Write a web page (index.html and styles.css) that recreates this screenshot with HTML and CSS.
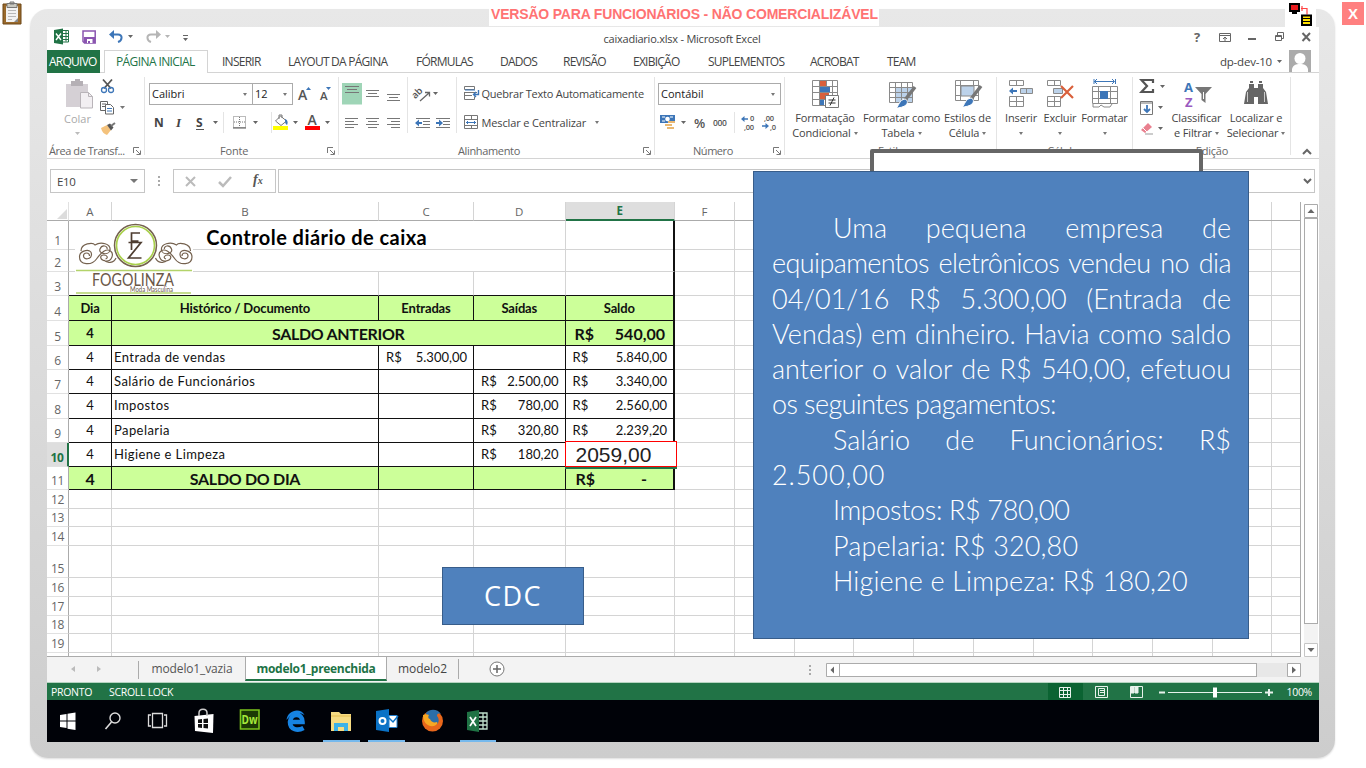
FILE: index.html
```html
<!DOCTYPE html>
<html lang="pt-BR">
<head>
<meta charset="utf-8">
<title>caixadiario.xlsx - Microsoft Excel</title>
<link rel="stylesheet" href="styles.css">
</head>
<body>
<div class="frame">
 <div class="window">
  <header class="titlebar">
   <svg width="150" height="23" viewBox="47 27 150 23">
    <path d="M54 30l9-1.500v16L54 43z" fill="#217346"/><path d="M56 33.500l5 6.500M61 33.500l-5 6.500" stroke="#fff" stroke-width="1.400"/>
    <path d="M63 30.500h5.500v11.500H63M63 33.500h5M63 36.500h5M63 39.500h5M66 30.500v11" stroke="#217346" fill="none"/>
    <path d="M83 31h12.200v12H84.500L83 41.500z" fill="none" stroke="#8a55b0" stroke-width="1.500"/><path d="M84 37h11v6H84z" fill="#8a55b0"/><path d="M87 39h5.500v4H87z" fill="#fff"/><path d="M88 41h2v2h-2z" fill="#8a55b0"/>
    <path d="M111 34.500h7c5 0 4.500 6 0 7.500" fill="none" stroke="#3d76b8" stroke-width="2"/><path d="M109 34.500l5-4.500v9z" fill="#3d76b8"/>
    <path d="M128 35h5l-2.500 3zM183 38h5l-2.500 3z" fill="#666"/><path d="M183 35.500h5" stroke="#666"/>
    <path d="M158 34.500h-7c-5 0-4.500 6 0 7.500" fill="none" stroke="#b5b5b5" stroke-width="2"/><path d="M161 34.500l-5-4.500v9z" fill="#b5b5b5"/><path d="M165 35h5l-2.500 3z" fill="#b5b5b5"/>
   </svg>
   <span class="doc-title">caixadiario.xlsx - Microsoft Excel</span>
   <svg width="132" height="23" viewBox="1187 27 132 23" fill="none" stroke="#666">
    <text x="1194" y="42" class="help">?</text>
    <path d="M1219.500 33.500h11v8h-11zM1219.500 35.500h11M1225 41v-4M1223 39l2-2 2 2"/>
    <path d="M1248 39h8" stroke-width="2"/>
    <path d="M1275.500 35.500h6v5h-6zM1277.500 35v-2.500h6v6h-2M1275 36.500h6"/>
    <path d="M1302.500 33l7.500 8M1310 33l-7.500 8" stroke-width="2"/>
   </svg>
  </header>

  <nav class="tabs">
   <span class="tab file">ARQUIVO</span>
   <span class="tab active">PÁGINA INICIAL</span>
   <span class="tab">INSERIR</span><span class="tab">LAYOUT DA PÁGINA</span><span class="tab">FÓRMULAS</span><span class="tab">DADOS</span><span class="tab">REVISÃO</span><span class="tab">EXIBIÇÃO</span><span class="tab">SUPLEMENTOS</span><span class="tab">ACROBAT</span><span class="tab">TEAM</span>
   <span class="tab user">dp-dev-10</span>
   <svg width="42" height="22" viewBox="1277 50 42 22"><path d="M1277 60h5l-2.500 3z" fill="#666"/><path d="M1289 50h22v22h-22z" fill="#ababab"/><circle cx="1300" cy="58.500" r="5.500" fill="#fff"/><path d="M1292 72v-3c1-4 4-5 8-5s7 1 8 5v3z" fill="#fff"/></svg>
  </nav>

  <section class="ribbon">
   <div class="group g-clip">
    <div class="tools">
     <svg width="97" height="71" viewBox="47 73 97 71" fill="none">
      <path d="M66 84h22v23H66z" fill="#d5d0d5"/><path d="M71 81h12v5H71zM75 79h5v3h-5z" fill="#b5b0b5"/><path d="M80.500 92.500h8l4 4v11.500h-12z" fill="#f2eff2" stroke="#b9b4b9"/><path d="M88.500 92.500v4h4" stroke="#b9b4b9"/>
      <text x="64" y="122.500" class="btn-text dim">Colar</text><path d="M75 132h5l-2.500 3z" fill="#bbb"/>
      <path d="M103 79.500l8 9M112 79.500l-8 9" stroke="#555" stroke-width="1.800"/><circle cx="104" cy="90" r="2.500" stroke="#3d76b8" stroke-width="1.300"/><circle cx="111" cy="90" r="2.500" stroke="#3d76b8" stroke-width="1.300"/>
      <path d="M100.500 101.500h7v9h-7zM102 104h4M102 106.500h4" stroke="#666"/><path d="M105.500 104.500h5l3 3v6.500h-8z" fill="#fff" stroke="#666"/><path d="M107 108.500h5M107 111h5" stroke="#3d76b8"/>
      <path d="M120 106h5l-2.500 3z" fill="#777"/>
      <path d="M101 128l6-3 4 5-4 5c-3-1-5-3-6-7z" fill="#f4c27c"/><path d="M107 125l3-1.500 3.500 4-2.500 3z" fill="#555"/><path d="M111 126l4-3" stroke="#777" stroke-width="2"/>
     </svg>
    </div>
    <div class="caption">Área de Transf...<svg class="launch" width="8" height="8"><path d="M.5 6V.5H6M3 3l4 4M7.500 3.500v4h-4" fill="none" stroke="#777"/></svg></div>
   </div>

   <div class="group g-font">
    <div class="tools">
     <div class="line first"><span class="combo font-name">Calibri</span><span class="combo font-size">12</span>
      <svg width="42" height="22" viewBox="294 83 42 22" fill="#555"><text x="297" y="99.500" class="glyph-a">A</text><path d="M305 90l2.500-3 2.500 3z" fill="#3d76b8"/><text x="319" y="99.500" class="glyph-a small">A</text><path d="M325 87h5l-2.500 3z" fill="#3d76b8"/></svg>
     </div>
     <svg width="190" height="30" viewBox="148 109 190 30" fill="none" stroke="#777">
      <g class="style-letters"><text x="154" y="127">N</text><text x="176" y="127" class="it">I</text><text x="196" y="127">S</text></g>
      <path d="M196 129.500h8" stroke="#555"/><path d="M223.500 112v21M271.500 112v21" stroke="#e4e4e4"/>
      <path d="M233.500 116.500h12v11h-12zM239.500 117v10M234 122h12" stroke-dasharray="1 1"/><path d="M233 128h13" stroke="#555"/>
      <path d="M213 121h5l-2.500 3zM253 121h5l-2.500 3zM293 121h5l-2.500 3zM325 121h5l-2.500 3z" fill="#666" stroke="none"/>
      <path d="M275.500 121l5-5 6 5-5.500 4.500zM279 119v-4h3v3"/><path d="M285 119c3 1 3 4 2 6-2-1-2-3-2-6z" fill="#3d76b8" stroke="none"/>
      <path d="M273 126h15v4h-15z" fill="#ff0" stroke="none"/><path d="M305 126h15v4h-15z" fill="#f00" stroke="none"/>
      <text x="307.500" y="125" class="glyph-a bold">A</text>
     </svg>
    </div>
    <div class="caption">Fonte<svg class="launch" width="8" height="8"><path d="M.5 6V.5H6M3 3l4 4M7.500 3.500v4h-4" fill="none" stroke="#777"/></svg></div>
   </div>

   <div class="group g-align">
    <div class="tools row-tools">
     <svg width="118" height="71" viewBox="339 73 118 71" fill="none" stroke="#777">
      <path d="M342 83h20v21.500h-20z" fill="#9fd5b7" stroke="none"/>
      <path d="M345 86.500h14M347 89.500h10M345 92.500h14M366 90.500h13M368 93.500h9M366 96.500h13M387 94.500h13M389 97.500h9M387 100.500h13"/>
      <path d="M345 118.500h13M345 121.500h9M345 124.500h13M345 127.500h9M366 118.500h13M368 121.500h9M366 124.500h13M368 127.500h9M387 118.500h13M391 121.500h9M387 124.500h13M391 127.500h9"/>
      <path d="M407.500 77v56M456.500 77v56" stroke="#e4e4e4"/>
      <text x="414" y="94" transform="rotate(-45 421 95)" class="tiny ab">ab</text><path d="M420 101l9-8M425 92.500h4.500v4" stroke="#666" stroke-width="1.300"/>
      <path d="M433 92h5l-2.500 3z" fill="#666" stroke="none"/>
      <path d="M416 118.500h14M423 121.500h7M423 124.500h7M416 127.500h14M436 118.500h14M443 121.500h7M443 124.500h7M436 127.500h14"/>
      <path d="M416 123h6M436 123h6" stroke="#3d76b8" stroke-width="2"/><path d="M415 123l4-3.500v7zM443 123l-4-3.500v7z" fill="#3d76b8" stroke="none"/>
     </svg>
     <div class="text-buttons">
      <span class="tb wrap-text"><svg width="16" height="15" fill="none" stroke="#777"><path d="M.5 .5h10v3H.5zM0 6.500h13M.5 6v7.500h10v-3M1 9.500h7"/><path d="M1 4h10" stroke="#3d76b8"/><path d="M14.500 4v4.500h-5M12 6L9.500 8.500 12 11" stroke="#3d76b8" stroke-width="1.400"/></svg>Quebrar Texto Automaticamente</span>
      <span class="tb merge"><svg width="16" height="15" fill="none" stroke="#777"><path d="M.5 .5h13v13H.5zM0 4.500h14M0 10.500h14M7.500 0v4M7.500 11v3"/><path d="M2 7.500h10M4 6L2.500 7.500 4 9M10 6l1.500 1.500L10 9" stroke="#3d76b8"/></svg>Mesclar e Centralizar<i class="arrow"></i></span>
     </div>
    </div>
    <div class="caption cap-align">Alinhamento<svg class="launch" width="8" height="8"><path d="M.5 6V.5H6M3 3l4 4M7.500 3.500v4h-4" fill="none" stroke="#777"/></svg></div>
   </div>

   <div class="group g-num">
    <div class="tools">
     <div class="line first"><span class="combo number-format">Contábil</span></div>
     <svg width="128" height="30" viewBox="656 109 128 30" fill="none">
      <path d="M661 115h15v8h-15z" fill="#3d76b8"/><path d="M663 117h3M671 117h3M663 121h3" stroke="#fff"/><circle cx="668.500" cy="119" r="2.300" fill="#fff"/><path d="M666 124h7v2h-7zM668 127h7v2h-7zM669 121h7v2h-7z" fill="#e9b872"/>
      <path d="M682 121h5l-2.500 3z" fill="#666"/><text x="695" y="128" class="pct">%</text><text x="714" y="125.500" class="tiny b">000</text><path d="M735.500 112v21" stroke="#e4e4e4"/>
      <path d="M744 119h5M763 126h6" stroke="#3d76b8" stroke-width="1.600"/><path d="M742 119l3.500-3v6zM770 126l-3.500-3v6z" fill="#3d76b8"/>
      <g class="tiny dec"><text x="751" y="121">0</text><text x="745" y="129.500">,00</text><text x="765" y="121">,00</text><text x="771" y="129.500">,0</text></g>
     </svg>
    </div>
    <div class="caption">Número<svg class="launch" width="8" height="8"><path d="M.5 6V.5H6M3 3l4 4M7.500 3.500v4h-4" fill="none" stroke="#777"/></svg></div>
   </div>

   <div class="group g-style">
    <div class="tools row-tools">
     <span class="big w-cond"><svg width="30" height="31" fill="none" stroke="#8a8a8a"><path d="M2.500 2.500h25v25h-25zM9.500 2v26M16.500 2v26M22.500 2v26M3 8.500h24M3 14.500h24M3 21.500h24" /><path d="M10 3h6v5h-6zM10 15h9v6h-9z" fill="#d9603b" stroke="none"/><path d="M10 9h10v5H10zM10 22h4v5h-4z" fill="#3d76b8" stroke="none"/><path d="M15.500 17.500h13v12h-13z" fill="#fff" stroke="#777"/><path d="M18.500 22h7M18.500 25h7M24 19.500l-4 8" stroke="#333"/></svg>Formatação<br><span>Condicional<i class="arrow"></i></span></span>
     <span class="big w-tab"><svg width="30" height="31" fill="none" stroke="#8a8a8a"><path d="M8 9h18v15H8z" fill="#bcd2ea" stroke="none"/><path d="M2.500 4.500h23v20h-23zM8.500 4v20M14.500 4v20M20.500 4v20M3 9.500h23M3 14.500h23M3 19.500h23"/><path d="M28 9l-10 13" stroke="#777" stroke-width="3.500"/><path d="M18 21c3 1 3 4 1 6s-7 3-10 3c3-2 3-8 9-9z" fill="#3d76b8" stroke="#fff"/></svg>Formatar como<br><span>Tabela<i class="arrow"></i></span></span>
     <span class="big w-cel"><svg width="30" height="31" fill="none" stroke="#8a8a8a"><path d="M2.500 2.500h23v20h-23zM7.500 2v20M20.500 2v20M3 7.500h23M3 17.500h23"/><path d="M8 8h13v10H8z" fill="#bcd2ea"/><path d="M28 8l-10 13" stroke="#777" stroke-width="3.500"/><path d="M18 20c3 1 3 4 1 6s-7 3-10 3c3-2 3-8 9-9z" fill="#3d76b8" stroke="#fff"/></svg>Estilos de<br><span>Célula<i class="arrow"></i></span></span>
    </div>
    <div class="caption">Estilo</div>
   </div>

   <div class="group g-cells">
    <div class="tools row-tools">
     <span class="big w-ins"><svg width="28" height="31" fill="none" stroke="#8a8a8a"><path d="M2.500 2.500h14v5h-14zM9.500 3v4M2.500 18.500h14v10h-14zM9.500 18v10M3 23.500h13"/><path d="M13.500 10.500h12v5h-12z" fill="#bcd2ea"/><path d="M19.500 11v4"/><path d="M4 13h6" stroke="#3d76b8" stroke-width="2"/><path d="M2 13l4-3.500v7z" fill="#3d76b8" stroke="none"/></svg>Inserir<br><i class="arrow solo"></i></span>
     <span class="big w-exc"><svg width="30" height="31" fill="none" stroke="#8a8a8a"><path d="M2.500 2.500h13v5h-13zM9.500 3v4M2.500 18.500h13v10h-13zM9.500 18v10M3 23.500h12"/><path d="M8.500 10.500h9v5h-9z" fill="#bcd2ea"/><path d="M16 8l12 12M28 8L16 20" stroke="#d9603b" stroke-width="2.200"/></svg>Excluir<br><i class="arrow solo"></i></span>
     <span class="big w-for"><svg width="28" height="31" fill="none" stroke="#8a8a8a"><path d="M3 3.500h20M3 1v5M24.500 1v5M6 1L3.500 3.500 6 6M21 1l2.500 2.500L21 6" stroke="#3d76b8"/><path d="M1.500 8.500h25v17h-25zM7.500 8v18M19.500 8v18M2 13.500h25M2 20.500h25M2 26v3h6l2-2 3 2h6l2-3"/><path d="M9 13h8v8H9z" fill="#3d76b8" stroke="none"/></svg>Formatar<br><i class="arrow solo"></i></span>
    </div>
    <div class="caption">Células</div>
   </div>

   <div class="group g-edit">
    <div class="tools row-tools">
     <svg width="36" height="71" viewBox="1134 73 36 71" fill="none"><path d="M1154 83v-3h-11.500l5.500 6-5.500 6H1154v-3" stroke="#555" stroke-width="2.200"/><path d="M1161 85h5l-2.500 3zM1159 106h5l-2.500 3zM1159 127h5l-2.500 3z" fill="#666"/><path d="M1141.500 101.500h12v13h-12zM1142 103h12" stroke="#777"/><path d="M1148 105v7M1145 109l3 3 3-3" stroke="#3d76b8" stroke-width="1.800"/><path d="M1142 130l7-7 4 4-7 6z" fill="#e9808f"/><path d="M1144 128l4 4" stroke="#fff"/><path d="M1146 134h8" stroke="#999"/></svg>
     <span class="big w-sort"><svg width="30" height="31" class="az"><text x="2" y="14" fill="#3d76b8">A</text><text x="3" y="29" fill="#9a5bc0">Z</text><path d="M13 9h17l-6.500 7v9l-4-3v-6z" fill="#777"/><path d="M21.500 14v7" stroke="#fff"/></svg>Classificar<br><span>e Filtrar<i class="arrow"></i></span></span>
     <span class="big w-find"><svg width="30" height="31" fill="#666"><path d="M8 6h5v4h4V6h5v4l3 4 2 12H17v-7h-4v7H3l2-12 3-4z"/><path d="M9 3h3v2H9zM18 3h3v2h-3z"/><path d="M6.500 14v10M23.500 14v10" stroke="#ccc"/></svg>Localizar e<br><span>Selecionar<i class="arrow"></i></span></span>
    </div>
    <div class="caption">Edição</div>
   </div>
   <svg class="collapse" width="28" height="86" viewBox="1291 73 28 86"><path d="M1303 154l4-4 4 4" fill="none" stroke="#666" stroke-width="2"/></svg>
  </section>

  <section class="formula-bar">
   <div class="name-box">E10<i class="arrow wide"></i></div>
   <svg width="28" height="24"><path d="M13 7h2v2h-2zM13 11h2v2h-2zM13 15h2v2h-2z" fill="#aaa"/></svg>
   <div class="fx-box"><svg width="102" height="23" fill="none" stroke="#bbb" stroke-width="2"><path d="M12 7l9 9M21 7l-9 9"/><path d="M45 12l4 4 8-9" stroke-width="2.500"/></svg><span class="fx">f<small>x</small></span></div>
   <div class="formula-input"><svg width="10" height="8"><path d="M1 2l3.500 3.500L8 2" fill="none" stroke="#666" stroke-width="2"/></svg></div>
  </section>

  <main class="sheet-area">
   <div class="sheet">
    <div class="row head"><b><svg width="12" height="12"><path d="M11 1v10H1z" fill="#dcdcdc"/></svg></b><i>A</i><i>B</i><i>C</i><i>D</i><i class="sel">E</i><i>F</i><i class="rest"></i></div>
    <div class="row r1 open"><b>1</b><i class="title m4">Controle diário de caixa</i><i class="edge"></i><i></i><i class="rest"></i></div>
    <div class="row r2 open"><b>2</b><i class="m4"></i><i class="edge"></i><i></i><i class="rest"></i></div>
    <div class="row r3"><b>3</b><i class="nb"></i><i></i><i></i><i></i><i class="edge"></i><i></i><i class="rest"></i></div>
    <div class="row r4 data green strong"><b>4</b><i>Dia</i><i>Histórico / Documento</i><i>Entradas</i><i>Saídas</i><i class="edge">Saldo</i><i></i><i class="rest"></i></div>
    <div class="row r5 data green strong"><b>5</b><i>4</i><i class="m3 lg">SALDO ANTERIOR</i><i class="edge money lg"><span>R$</span><span>540,00</span></i><i></i><i class="rest"></i></div>
    <div class="row r6 data"><b>6</b><i>4</i><i class="lt">Entrada de vendas</i><i class="money"><span>R$</span><span>5.300,00</span></i><i></i><i class="edge money"><span>R$</span><span>5.840,00</span></i><i></i><i class="rest"></i></div>
    <div class="row r7 data"><b>7</b><i>4</i><i class="lt">Salário de Funcionários</i><i></i><i class="money"><span>R$</span><span>2.500,00</span></i><i class="edge money"><span>R$</span><span>3.340,00</span></i><i></i><i class="rest"></i></div>
    <div class="row r8 data"><b>8</b><i>4</i><i class="lt">Impostos</i><i></i><i class="money"><span>R$</span><span>780,00</span></i><i class="edge money"><span>R$</span><span>2.560,00</span></i><i></i><i class="rest"></i></div>
    <div class="row r9 data"><b>9</b><i>4</i><i class="lt">Papelaria</i><i></i><i class="money"><span>R$</span><span>320,80</span></i><i class="edge money"><span>R$</span><span>2.239,20</span></i><i></i><i class="rest"></i></div>
    <div class="row r10 data"><b class="cur">10</b><i>4</i><i class="lt">Higiene e Limpeza</i><i></i><i class="money"><span>R$</span><span>180,20</span></i><i class="edge active-cell"><span class="answer">2059,00</span></i><i></i><i class="rest"></i></div>
    <div class="row r11 data green strong"><b>11</b><i class="lg">4</i><i class="lg">SALDO DO DIA</i><i></i><i></i><i class="edge money lg last"><span>R$</span><span>-</span></i><i></i><i class="rest"></i></div>
    <div class="row r12"><b>12</b><i></i><i></i><i></i><i></i><i></i><i></i><i class="rest"></i></div>
    <div class="row r13"><b>13</b><i></i><i></i><i></i><i></i><i></i><i></i><i class="rest"></i></div>
    <div class="row r14"><b>14</b><i></i><i></i><i></i><i></i><i></i><i></i><i class="rest"></i></div>
    <div class="row r15"><b>15</b><i></i><i></i><i></i><i></i><i></i><i></i><i class="rest"></i></div>
    <div class="row r16"><b>16</b><i></i><i></i><i></i><i></i><i></i><i></i><i class="rest"></i></div>
    <div class="row r17"><b>17</b><i></i><i></i><i></i><i></i><i></i><i></i><i class="rest"></i></div>
    <div class="row r18"><b>18</b><i></i><i></i><i></i><i></i><i></i><i></i><i class="rest"></i></div>
    <div class="row r19"><b>19</b><i></i><i></i><i></i><i></i><i></i><i></i><i class="rest"></i></div>
    <div class="row r20"><b></b><i></i><i></i><i></i><i></i><i></i><i></i><i class="rest"></i></div>
    <svg class="logo" width="118" height="74" viewBox="75 221 118 74" fill="none">
     <path d="M75 221h118v74H75z" fill="#fff"/>
     <circle cx="135.500" cy="245.500" r="21" stroke="#75624f" stroke-width="1.500"/><circle cx="135.500" cy="245.500" r="19" stroke="#a9d04c" stroke-width="1.700"/>
     <path d="M131.500 250v-17h8.500M131.500 241h7M128.500 242.500h12.500l-12.500 15.500h13" stroke="#4e3d30" stroke-width="1.700"/>
     <g id="scroll" stroke="#75624f" stroke-width="1.200"><path d="M79.500 257c0-7 12-9 12-3s-8 6-8 2 6-4 6 0M79.500 257c0 8 12 9 17 2s10-11 14-8 1 11-5 10-6-6-2-6 5 3 2 4M81 251c0-8 12-9 14-6 6-4 16-1 15 5s-12 4-10-1 8-3 7 0M104 260c3 4 10 3 12-2"/></g>
     <use href="#scroll" transform="matrix(-1 0 0 1 271.500 0)"/>
     <path d="M76 270.500h116M76 293h115" stroke="#b3d36a" stroke-width="1.500"/>
     <text x="92" y="286" class="brand" textLength="82" lengthAdjust="spacingAndGlyphs">FOGOLINZA</text>
     <text x="130" y="291.500" class="brand-sub" textLength="43" lengthAdjust="spacingAndGlyphs">Moda Masculina</text>
    </svg>
   </div>
   <div class="vscroll">
    <svg width="14" height="14"><path d="M.5.5h13v13H.5z" fill="#fff" stroke="#ababab"/><path d="M3.500 9h7L7 5z" fill="#666"/></svg>
    <div class="vthumb"></div>
    <svg width="14" height="14"><path d="M.5.5h13v13H.5z" fill="#fff" stroke="#c6c6c6"/><path d="M3.500 5h7L7 9z" fill="#666"/></svg>
   </div>
  </main>

  <footer class="sheet-tabs">
   <svg width="92" height="25" viewBox="0 0 92 25"><path d="M28 9v6l-4-3zM50 9v6l4-3z" fill="#bbb"/><path d="M91.500 4v18" stroke="#ababab"/></svg>
   <span class="stab one">modelo1_vazia</span><span class="stab current">modelo1_preenchida</span><span class="stab two">modelo2</span>
   <svg class="add" width="16" height="16"><circle cx="8" cy="8" r="7" fill="#fff" stroke="#777"/><path d="M4 8h8M8 4v8" stroke="#666" stroke-width="1.500"/></svg>
   <svg class="grip" width="4" height="14"><path d="M1 2h2v2H1zM1 6h2v2H1zM1 10h2v2H1z" fill="#aaa"/></svg>
   <div class="hscroll"><svg width="14" height="14"><path d="M.5.5h13v13H.5z" fill="#fff" stroke="#ababab"/><path d="M8 3.500v7L4.500 7z" fill="#666"/></svg><div class="hthumb"></div><svg class="end" width="14" height="14"><path d="M.5.5h13v13H.5z" fill="#fff" stroke="#ababab"/><path d="M5 3.500v7L9 7z" fill="#666"/></svg></div>
  </footer>

  <div class="status"><span>PRONTO</span><span>SCROLL LOCK</span>
   <svg width="240" height="17" viewBox="1047 683 240 17" fill="none" stroke="#e8f2ec"><path d="M1048 683h35v17h-35z" fill="#0b6332" stroke="none"/><path d="M1059.500 687.500h11v10h-11zM1063.500 687v10M1067.500 687v10M1060 690.500h11M1060 694.500h11"/><path d="M1095.500 686.500h12v11h-12zM1098.500 688.500h6v7h-6zM1100 690.500h4M1100 692.500h4"/><path d="M1130.500 686.500h12v11h-12z"/><path d="M1131 687h3v6h-3zM1135 687h3v6h-3z" fill="#e8f2ec"/><path d="M1159 692.500h6M1265 692.500h8M1269 689v7" stroke-width="2"/><path d="M1168 692.500h94"/><path d="M1213 687.500h4v10h-4z" fill="#fff" stroke="none"/></svg>
   <span class="zoom">100%</span>
  </div>

  <div class="taskbar">
   <svg width="460" height="42" viewBox="47 700 460 42" fill="none">
    <path d="M60 715l6.500-1v6.500H60zM67.500 713.800l8-1.300v8h-8zM60 721.500h6.500v6.500l-6.500-1zM67.500 721.500h8v8.500l-8-1.300z" fill="#fff"/>
    <circle cx="115" cy="718" r="5" stroke="#ddd" stroke-width="1.400"/><path d="M111.500 722l-6 7" stroke="#ddd" stroke-width="1.600"/>
    <path d="M152.500 713.500h10v14h-10zM151 715h-2.500v11h2.500M164 715h2.500v11H164" stroke="#ddd" stroke-width="1.300"/>
    <path d="M194.500 716l19-2-.5 19-18-2z" fill="#fff"/><path d="M199 716v-3c0-5 8-5 8 0v3" stroke="#ccc" stroke-width="1.500"/><path d="M198 719.500l4-.5v4h-4zM203.500 719l4.500-.5v4.500h-4.500zM198 724h4v4l-4-.5zM203.500 724h4.500v4.500l-4.500-.5z" fill="#111"/>
    <path d="M240.500 710h18.500v19h-18.500z" fill="#1c3a05" stroke="#7bc41c" stroke-width="1.600"/><text x="241.500" y="724" class="dw" textLength="16" lengthAdjust="spacingAndGlyphs">Dw</text>
    <path d="M290 722h12.500c0-10-12-9-12.500 0 0 8 8 9 13.500 6" stroke="#1683e2" stroke-width="4.600"/><path d="M286.500 720c1-10 14-13 18-5-6-4-13-2-18 5z" fill="#1683e2"/>
    <path d="M331 712h8l2 2h10v17h-20z" fill="#f7dc83"/><path d="M331 716h20" stroke="#e5bd4e"/><path d="M334 731v-8h14v8h-4v-4h-6v4z" fill="#3cb2e8"/>
    <path d="M376 711l13-2v23l-13-2z" fill="#0a72c6"/><circle cx="382.500" cy="721" r="3" stroke="#fff" stroke-width="2"/><path d="M389 715.500h8v12h-8z" fill="#fff" stroke="#2680cd"/><path d="M389 718l4 4 5-6" stroke="#0a72c6" stroke-width="1.500"/>
    <circle cx="432.500" cy="721" r="10.500" fill="#e8671b"/><path d="M426 713c4-5 12-4 15 1-3-1-4 0-4 2 3 3 2 9-3 9-6 0-8-4-6-7-2-1-2-3-2-5z" fill="#2c6ea8"/><path d="M423 715c0 7 4 12 11 11 3-1 4-3 3-4-3 1-6 0-7-3-2 0-2-3-1-4-2-1-4-1-6 0z" fill="#f7a823"/>
    <path d="M467 712l12-2v22l-12-2z" fill="#1f7244"/><path d="M470 717l6 9M476 717l-6 9" stroke="#fff" stroke-width="1.700"/><path d="M479 713h8v16h-8M479 717h8M479 721h8M479 725h8M483 713v16" stroke="#bfe0cc" stroke-width="1.300"/>
    <path d="M323 741h37M368 741h37M460 741h36" stroke="#76b9ed" stroke-width="2"/>
   </svg>
  </div>
 </div>
</div>

<svg class="clip-icon" width="20" height="24" fill="none"><path d="M1 3h18v20H1z" fill="#9a6a2c" stroke="#6d4716"/><path d="M4 5h12v16H4z" fill="#f2f2f2"/><path d="M5 2.500h10v4H5zM8 1h4v2H8z" fill="#c8c8c0" stroke="#777"/><path d="M6 9.500h8M6 12.500h8M6 15.500h8M6 18.500h4" stroke="#b8b8b8"/><path d="M16 17v4h-4z" fill="#888"/></svg>
<div class="banner">VERSÃO PARA FUNCIONÁRIOS - NÃO COMERCIALIZÁVEL</div>
<div class="net-icon"><svg width="31" height="27" viewBox="1285 0 31 27" fill="none"><path d="M1290 4h9v7h-9z" fill="#e8191c" stroke="#000" stroke-width="2"/><path d="M1292 13h5" stroke="#000" stroke-width="2"/><path d="M1301 8.500h6v6M1302 6v5" stroke="#f44" stroke-width="1.200"/><path d="M1302 15.500h9v9.500h-9z" fill="#ffe000" stroke="#000" stroke-width="2"/><path d="M1303 18.500h8M1303 21.500h8" stroke="#000"/></svg></div>
<div class="close-x">X</div>
<div class="white-box"></div>
<article class="brief">
 <p class="stretch indent">Uma pequena empresa de</p>
 <p class="stretch tight">equipamentos eletrônicos vendeu no dia</p>
 <p class="stretch">04/01/16 R$ 5.300,00 (Entrada de</p>
 <p class="stretch">Vendas) em dinheiro. Havia como saldo</p>
 <p class="stretch">anterior o valor de R$ 540,00, efetuou</p>
 <p class="tight">os seguintes pagamentos:</p>
 <p class="stretch indent">Salário de Funcionários: R$</p>
 <p class="loose">2.500,00</p>
 <p class="indent snug">Impostos: R$ 780,00</p>
 <p class="indent even">Papelaria: R$ 320,80</p>
 <p class="indent even">Higiene e Limpeza: R$ 180,20</p>
</article>
<div class="cdc">CDC</div>
</body>
</html>
```
FILE: styles.css
```css
*{box-sizing:border-box}
body{margin:0;width:1366px;height:768px;overflow:hidden;background:#fff;position:relative;font-family:"Open Sans","Noto Sans",sans-serif;font-size:12px;color:#444}
svg{display:block;flex:none}
i,b{font-style:normal;font-weight:400}
.frame{margin:9px 0 0 30px;width:1305px;height:749px;padding:18px 16px 16px 17px;border-radius:18px;background:linear-gradient(#e8e8e8,#cdcdcd);box-shadow:0 1px 2px #ddd}
.window{width:1272px;height:715px;background:#fff;overflow:hidden;display:flex;flex-direction:column}
.window>*{flex:none}

.titlebar{height:23px;display:flex;justify-content:space-between;align-items:center}
.doc-title{font-size:11px;letter-spacing:-.23px;margin-left:-20px;color:#444}
.help{font:bold 13px "Open Sans",sans-serif;fill:#666;stroke:none}

.tabs{height:23px;border-bottom:1px solid #d4d4d4;display:grid;grid-template-columns:57px 118px 66px 128px 84px 63px 70px 75px 102px 77px 283px 1fr 42px;line-height:23px;font-size:12px;letter-spacing:-.75px}
.tab{white-space:nowrap}
.tabs .file{background:#217346;color:#fff;width:53px;padding-left:2px;height:23px}
.tabs .active{width:104px;height:23px;color:#217346;border:1px solid #d4d4d4;border-bottom:0;background:#fff;line-height:22px;padding-left:11px;letter-spacing:-.6px}
.tabs .user{text-align:right;padding-right:5px;letter-spacing:-.2px;font-size:11.500px}

.ribbon{height:86px;border-bottom:1px solid #d4d4d4;display:flex}
.group{height:85px;display:flex;flex-direction:column;background:linear-gradient(#e4e4e4,#e4e4e4) right 4px/1px 78px no-repeat}
.group .tools{height:71px}
.row-tools{display:flex}
.g-clip{width:98px}.g-font{width:194px}.g-align{width:316px}.g-num{width:130px}.g-style{width:212px}.g-cells{width:136px}.g-edit{width:158px}
.caption{height:14px;line-height:14px;font-size:11px;letter-spacing:-.2px;color:#666;text-align:center;display:flex;align-items:center;justify-content:center;padding-left:14px;white-space:nowrap}
.caption .launch{margin:0 4px 0 auto}
.g-clip .caption{padding-left:2px;letter-spacing:-.45px}
.g-font .caption{padding-left:75px}
.group .cap-align{padding-left:119px;letter-spacing:-.35px}
.g-num .caption{padding-left:38px;letter-spacing:-.45px}
.g-style .caption,.g-cells .caption,.g-edit .caption{padding-left:0}
.btn-text{font-size:11px;fill:#444}.btn-text.dim{fill:#aaa}
.line.first{display:flex;padding:10px 0 0 4px;height:36px}
.combo{border:1px solid #ababab;height:22px;line-height:20px;padding-left:2px;font-size:11px;color:#222;position:relative}
.combo::after{content:"";position:absolute;right:5px;top:9px;border:2.500px solid transparent;border-top:3px solid #777;border-bottom:0}
.font-name{width:104px}.font-size{width:41px;margin-left:-1px}.number-format{width:123px}
.g-font .line svg{margin-left:2px}
.g-font .tools>svg{margin-left:3px}
.g-num .line{padding-left:3px}
.glyph-a{font:600 14px "Open Sans",sans-serif;fill:#555;stroke:none}
.glyph-a.small{font-size:11.500px}
.style-letters text{font:bold 12px "Open Sans",sans-serif;fill:#444;stroke:none}
.style-letters .it{font:italic bold 13px "Liberation Serif",serif}
.tiny{font:600 8.500px "Open Sans",sans-serif;fill:#555;stroke:none;letter-spacing:-.3px}
.tiny.ab{font-size:9.500px}
.tiny.dec{font-size:7.500px}
.pct{font:600 13px "Open Sans",sans-serif;fill:#555}
.text-buttons{display:flex;flex-direction:column;padding:12px 0 0 6.500px;gap:13px}
.tb{display:flex;align-items:center;height:16px;gap:2px;font-size:11px;white-space:nowrap;letter-spacing:-.24px}
.merge{letter-spacing:-.14px}
.arrow{display:inline-block;border:2.500px solid transparent;border-top:3px solid #777;border-bottom:0;margin-left:3px;vertical-align:2px}
.merge .arrow{margin-left:7px}
.arrow.solo{margin:0}
.arrow.wide{border-width:4px 4px 0;margin:0}
.big{display:block;text-align:center;font-size:11px;line-height:15px;white-space:nowrap;padding-top:5px;letter-spacing:-.15px}
.big svg{margin:0 auto 1px;overflow:visible}
.w-cond{width:76px;margin-left:2px}.w-tab{width:77px}.w-cel{width:55px}
.w-ins{width:38px;margin-left:5px}.w-exc{width:40px}.w-for{width:49px}
.w-sort{width:55px}.w-find{width:64px}
.az text{font:bold 13px "Open Sans",sans-serif}

.formula-bar{height:43px;padding:10px 4px 0 3px;display:flex}
.name-box{width:95px;height:24px;border:1px solid #c6c6c6;padding:0 6px;display:flex;justify-content:space-between;align-items:center;font-size:11.500px;letter-spacing:-.4px}
.fx-box{width:103px;height:24px;border:1px solid #c6c6c6;display:flex}
.fx{font:italic bold 14px "Liberation Serif",serif;margin-left:-23px;line-height:20px;color:#555}
.fx small{font-size:10px}
.formula-input{flex:1;height:24px;border:1px solid #c6c6c6;margin-left:2px;display:flex;justify-content:flex-end;align-items:center;padding-right:1px}

.sheet-area{height:455px;display:flex;background:#fff}
.sheet{width:1254px;position:relative;border-right:1px solid #ababab;border-bottom:1px solid #ababab;overflow:hidden}
.row{display:grid;grid-template-columns:22px 43px 267px 95px 91.500px 109.500px 60px 1fr}
.row>b{border-right:1px solid #ababab;border-bottom:1px solid #e1e1e1;color:#666;text-align:center;display:flex;align-items:flex-end;justify-content:center;font-size:12px;line-height:16px;letter-spacing:-.4px}
.row>i{border-right:1px solid #d4d4d4;border-bottom:1px solid #d4d4d4;display:flex;align-items:center;justify-content:center;font-family:Lato,sans-serif;font-size:13px;color:#111;white-space:nowrap;min-width:0}
.row>.rest{border-right:0;background:repeating-linear-gradient(90deg,transparent 0 58.700px,#d4d4d4 58.700px 59.700px)}
.row>.m4{grid-column:span 4}.row>.m3{grid-column:span 3}
.head{height:19px}
.head>i{font-family:"Open Sans",sans-serif;color:#666;font-size:11.500px;border-bottom-color:#ababab}
.head>b{border-color:#e1e1e1 #e1e1e1 #ababab;justify-content:flex-end}
.head>.sel{background:#dedede;color:#217346;font-weight:700;border-bottom:2px solid #217346}
.row>i.edge{border-right:2px solid #111}
.row>i.nb{border-right:0}
.r1{height:28px}.r2{height:23px}.r3{height:24px}.r4{height:25px}.r5{height:25px}.r6{height:24px}.r7{height:24px}.r8{height:25px}.r9{height:24px}.r10{height:24px}.r11{height:23px}.r12{height:19px}.r13{height:18px}.r14{height:19px}.r15{height:32px}.r16{height:19px}.r17{height:19px}.r18{height:18px}.r19{height:19px}.r20{height:4px}
.row>.title{font-size:20px;font-weight:700;color:#000;padding-top:4px;letter-spacing:.45px}
.r3>i:not(:nth-last-child(-n+2)){border-bottom-color:#111}
.data>i:not(:nth-last-child(-n+2)){border-right-color:#111;border-bottom-color:#111;padding-bottom:2px}
.green>i:not(:nth-last-child(-n+2)){background:#ccff99;padding-bottom:0}
.strong>i{font-weight:700;letter-spacing:-.15px}
.row>i.lg{font-size:16px;letter-spacing:-.3px}
.row>i.lt{justify-content:flex-start;padding-left:2px;letter-spacing:.42px}
.row>i.money{justify-content:space-between;padding-left:7px;padding-right:6px}
.row>i.money.lg{padding-left:9px;padding-right:8px;letter-spacing:0}
.row>i.money.last{padding-left:10px;padding-right:26px}
.row>b.cur{background:#dedede;color:#217346;font-weight:700;border-right:2px solid #217346}
.row>i.active-cell{position:relative}
.answer{position:absolute;left:-1px;top:-2px;width:112px;height:26px;border:1px solid #f00;background:#fff;font:21px/25px "Liberation Sans",sans-serif;padding-left:10px;box-shadow:0 2px 0 #217346;z-index:2;color:#222}
.logo{position:absolute;left:28px;top:19px}
.brand{font:17px Lato,sans-serif;fill:#6b5848}
.brand-sub{font:7.500px Lato,sans-serif;fill:#6b5848}

.vscroll{width:18px;padding:2px 1px 0 3px;display:flex;flex-direction:column}
.vthumb{height:406px;border:1px solid #ababab;margin-bottom:19px;background:#fff;box-shadow:0 19px 0 #f3f3f3}

.sheet-tabs{height:26px;background:#f3f3f3;display:flex;border-bottom:1px solid #b5d3c0}
.stab{height:24px;line-height:23px;text-align:center;font-size:12px;white-space:nowrap}
.stab.one{width:106px;color:#555;letter-spacing:-.15px}
.stab.current{width:142px;background:#fff;color:#217346;font-weight:700;border:1px solid #ababab;border-top:0;border-bottom:2px solid #217346;letter-spacing:-.3px}
.stab.two{width:72px;border-right:1px solid #ababab;height:20px;margin-top:2px;line-height:20px;letter-spacing:-.1px}
.add{margin:4px 0 0 30px}
.grip{margin:6px 0 0 303px}
.hscroll{margin:6px 0 0 14px;width:475px;height:14px;background:#e8e8e8;display:flex}
.hthumb{width:418px;margin-left:-1px;border:1px solid #ababab;background:#fff}
.end{margin-left:auto}

.status{height:17px;background:#217346;color:#fff;font-size:10.500px;line-height:18px;letter-spacing:-.3px;display:flex;padding-left:4px}
.status span+span{margin-left:17px}
.status svg{margin-left:auto}
.status .zoom.zoom{margin:0 7px 0 0}
.taskbar{height:42px;background:#000208}
.dw{font:bold 13px "Open Sans",sans-serif;fill:#a6ea3b}

.clip-icon{position:absolute;left:2px;top:1px}
.banner{position:absolute;left:489px;top:6px;width:390px;height:20px;background:#fff;color:#ff7373;font:bold 14px/16px "Liberation Sans",sans-serif;letter-spacing:-.18px;white-space:nowrap;padding-left:2px}
.net-icon{position:absolute;left:1285px;top:0;background:#fff}
.close-x{position:absolute;left:1342px;top:2px;width:22px;height:23px;background:#ff8080;color:#fff;font:bold 15px/23px "Liberation Sans",sans-serif;text-align:center}
.white-box{position:absolute;left:870px;top:149px;width:333px;height:40px;background:#fff;border:4px solid #666;border-radius:2px}
.brief{position:absolute;left:753px;top:171px;width:496px;height:468px;background:#4f81bd;border:1px solid #385d8a;padding:38px 17px 0 18px;color:#fff;font:300 27px/35.300px Lato,sans-serif}
.brief p{margin:0;white-space:nowrap}
.brief .indent{padding-left:61px}
.brief .stretch{text-align-last:justify}
.brief .tight{letter-spacing:-.6px}
.brief .loose{letter-spacing:.9px}
.brief .snug{letter-spacing:-.35px}
.brief .even{letter-spacing:.15px}
.cdc{position:absolute;left:442px;top:567px;width:142px;height:58px;background:#4f81bd;border:1px solid #385d8a;color:#fff;font-size:27px;line-height:56px;letter-spacing:1.500px;text-align:center}
```
